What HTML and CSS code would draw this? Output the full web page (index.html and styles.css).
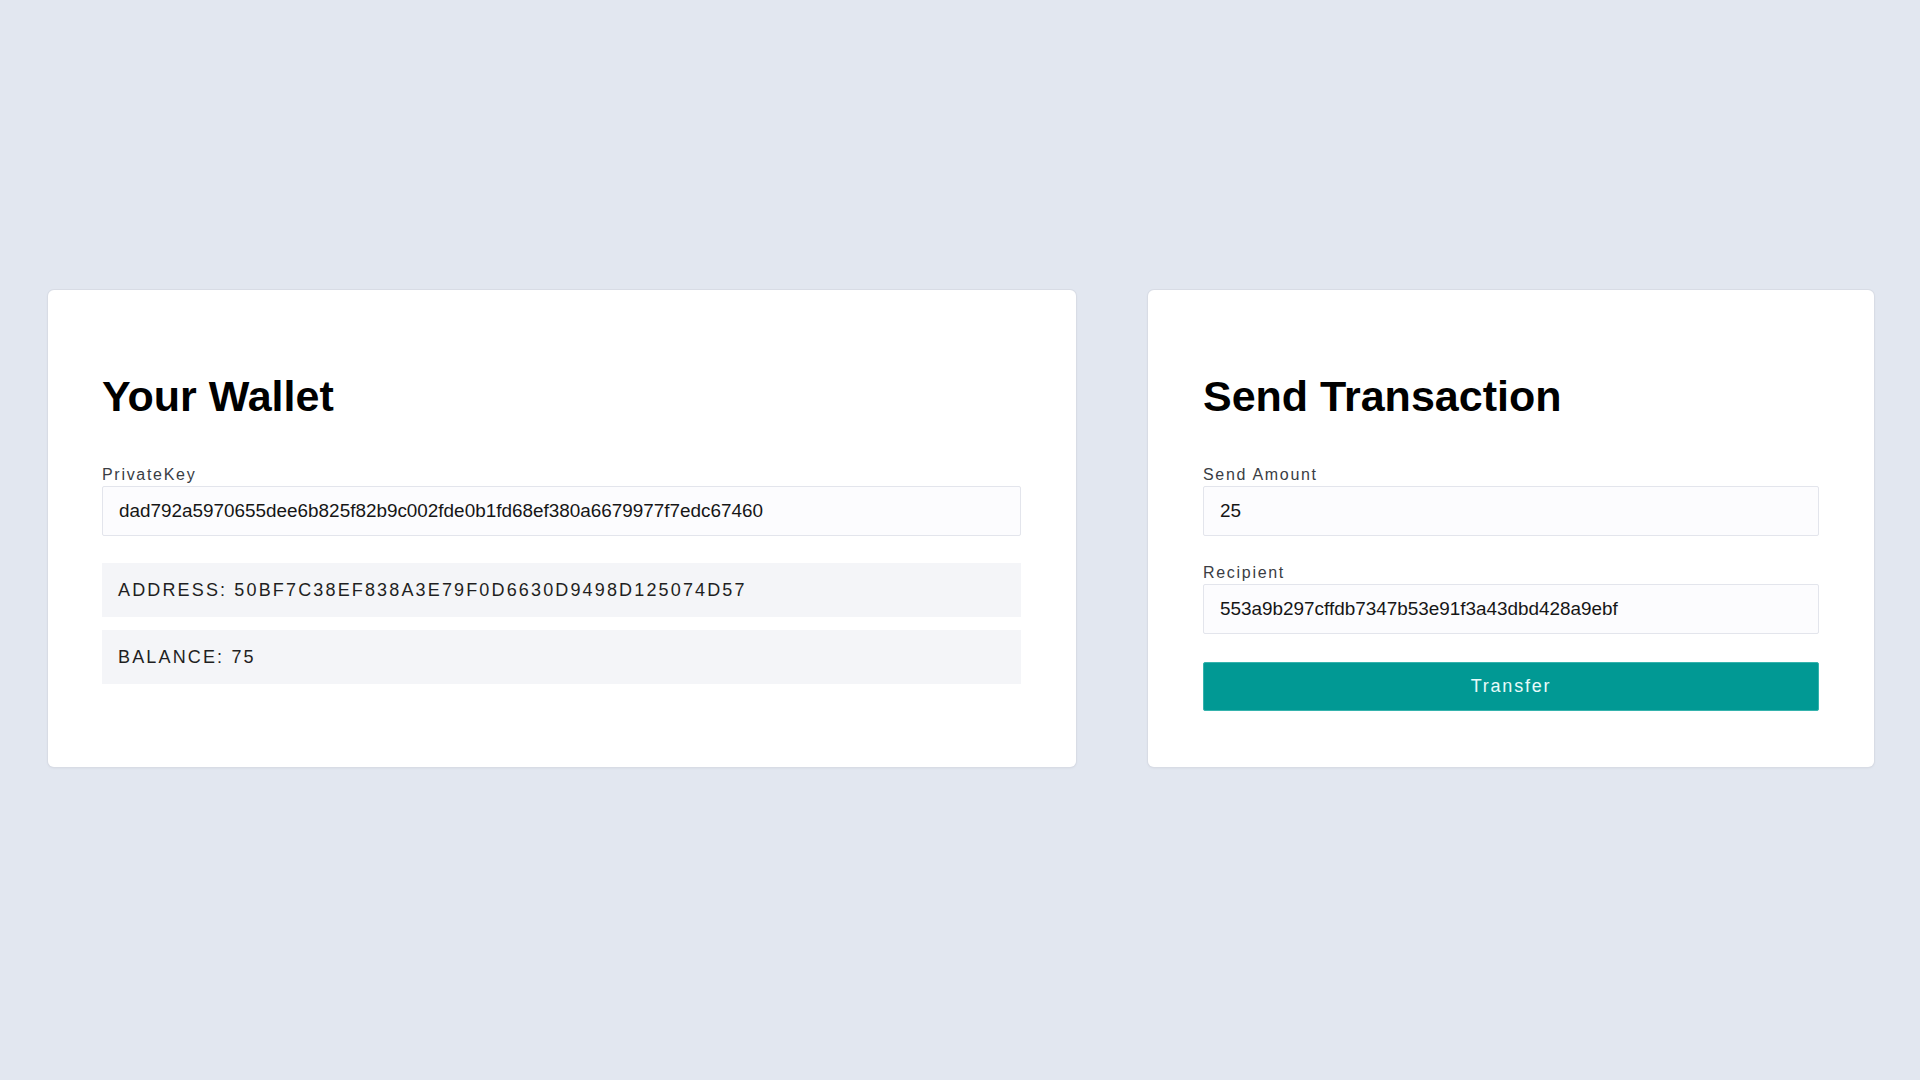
FILE: index.html
```html
<!DOCTYPE html>
<html lang="en">
<head>
<meta charset="utf-8">
<title>Wallet</title>
<link rel="stylesheet" href="styles.css">
</head>
<body>
<div class="app">
  <div class="card wallet">
    <h1 class="title">Your Wallet</h1>
    <label class="field">
      <span class="field-label">PrivateKey</span>
      <input class="field-input" type="text" value="dad792a5970655dee6b825f82b9c002fde0b1fd68ef380a6679977f7edc67460">
    </label>
    <div class="info">ADDRESS: 50BF7C38EF838A3E79F0D6630D9498D125074D57</div>
    <div class="info">BALANCE: 75</div>
  </div>
  <form class="card transfer">
    <h1 class="title">Send Transaction</h1>
    <label class="field">
      <span class="field-label">Send Amount</span>
      <input class="field-input" type="text" value="25">
    </label>
    <label class="field">
      <span class="field-label">Recipient</span>
      <input class="field-input" type="text" value="553a9b297cffdb7347b53e91f3a43dbd428a9ebf">
    </label>
    <button class="button" type="button">Transfer</button>
  </form>
</div>
</body>
</html>
```
FILE: styles.css
```css
* { box-sizing: border-box; }
html, body { margin: 0; padding: 0; }
body {
  background: #e2e7f0;
  font-family: "Liberation Sans", Arial, sans-serif;
  color: #111;
  min-height: 1080px;
}
.app {
  display: flex;
  align-items: stretch;
  gap: 72px;
  padding: 290px 46px 0 48px;
}
.card {
  background: #fff;
  border-radius: 6px;
  box-shadow: 0 0 0 1px #d8dce5, 0 1px 3px rgba(0,0,0,0.07);
  padding: 55px 55px 56px 54px;
  margin: 0;
}
.wallet { flex: 0 0 1028px; }
.transfer { flex: 0 0 726px; padding-left: 55px; }
.title {
  font-size: 43px;
  font-weight: bold;
  margin: 27px 0 45px;
  line-height: 1.15;
  color: #000;
}
.field {
  display: block;
  margin-bottom: 28px;
}
.field-label {
  display: block;
  font-size: 16px;
  letter-spacing: 1.7px;
  color: #3a3d44;
  line-height: 18px;
  margin-bottom: 2px;
}
.field-input {
  display: block;
  width: 100%;
  height: 50px;
  padding: 0 16px;
  border: 1px solid #e3e5ec;
  border-radius: 2px;
  background: #fcfcfe;
  font-family: "Liberation Sans", Arial, sans-serif;
  font-size: 18.9px;
  color: #161616;
  outline: none;
}
.info {
  background: #f4f5f8;
  padding: 0 16px;
  height: 54px;
  line-height: 54px;
  font-size: 18px;
  letter-spacing: 2.15px;
  color: #1f1f22;
  margin-bottom: 13px;
}
.wallet .field { margin-bottom: 27px; }
.button {
  display: block;
  width: 100%;
  height: 49px;
  border: 1px solid #35b3ad;
  border-radius: 2px;
  background: #019994;
  color: #e8fbfa;
  font-family: "Liberation Sans", Arial, sans-serif;
  font-size: 18px;
  letter-spacing: 1.8px;
  cursor: pointer;
}
```
